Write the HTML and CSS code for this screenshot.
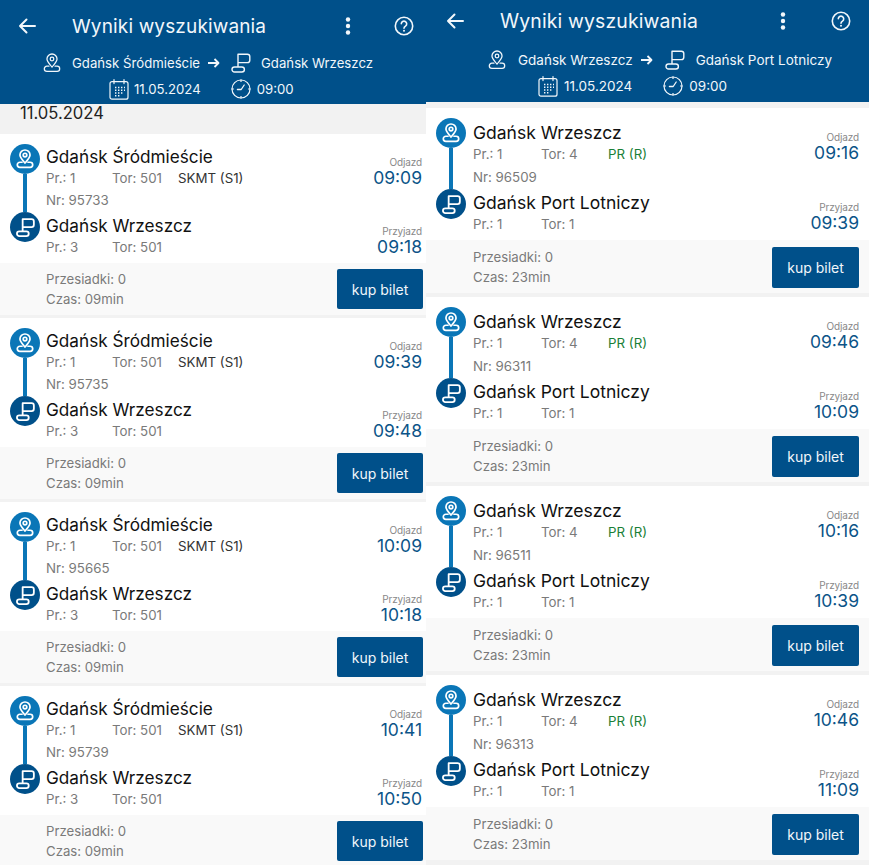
FILE: index.html
```html
<!DOCTYPE html>
<html lang="pl">
<head>
<meta charset="utf-8">
<title>Wyniki wyszukiwania</title>
<link rel="stylesheet" href="styles.css">
</head>
<body>
<svg class="defs" width="0" height="0" aria-hidden="true">
  <symbol id="pin" viewBox="0 0 20 22">
    <path class="s" d="M10 15.500C7.400 12.200 4.400 9.600 4.400 6.600a5.600 5.600 0 0 1 11.200 0c0 3-3 5.600-5.600 8.900z" stroke-linejoin="round"/>
    <circle class="s" cx="10" cy="6.600" r="2"/>
    <path class="s" d="M6.600 14.600H4.300a2.800 2.800 0 0 0 0 5.700h11.400a2.800 2.800 0 0 0 0-5.700h-2.300" stroke-linecap="round"/>
  </symbol>
  <symbol id="flag" viewBox="0 0 20 20">
    <path class="s" d="M7 14V1.200h9.400a2.400 2.400 0 0 1 2.400 2.400v3.600a2.400 2.400 0 0 1-2.400 2.400H7" stroke-linejoin="round"/>
    <rect class="s" x="1" y="14" width="12.400" height="5" rx="2.500"/>
  </symbol>
  <symbol id="cal" viewBox="0 0 20 21">
    <rect x="1" y="2.600" width="18" height="17.600" rx="2" fill="none" stroke="currentColor" stroke-width="1.200"/>
    <path d="M5 .6v4M15 .6v4" stroke="currentColor" stroke-width="1.200" stroke-linecap="round"/>
    <path d="M6 8.500h1.400M9 8.500h1.400M12 8.500h1.400M15 8.500h1M6 11.200h1.400M9 11.200h1.400M12 11.200h1.400M15 11.200h1M6 14h1.400M9 14h1.400M12 14h1.400M6 16.700h1.400M9 16.700h1.400" stroke="currentColor" stroke-width="1.400"/>
  </symbol>
  <symbol id="clock" viewBox="0 0 20 20">
    <circle cx="10" cy="10" r="9" fill="none" stroke="currentColor" stroke-width="1.200"/>
    <path d="M10 .5v2.400M19.500 10h-2.400M10 19.500v-2.400M.5 10h2.400" stroke="currentColor" stroke-width="1.200"/>
    <path d="M6.400 10.500H10.200L13.200 6" fill="none" stroke="currentColor" stroke-width="1.300" stroke-linecap="round" stroke-linejoin="round"/>
  </symbol>
  <symbol id="back" viewBox="0 0 18 16">
    <path d="M17 8H2M8.500 1.500 2 8l6.500 6.500" fill="none" stroke="currentColor" stroke-width="2" stroke-linecap="round" stroke-linejoin="round"/>
  </symbol>
  <symbol id="help" viewBox="0 0 20 20">
    <circle cx="10" cy="10" r="8.700" fill="none" stroke="currentColor" stroke-width="1.600"/>
    <path d="M7.300 7.800a2.700 2.700 0 1 1 4.200 2.300c-1 .7-1.500 1.100-1.500 2.200" fill="none" stroke="currentColor" stroke-width="1.600" stroke-linecap="round"/>
    <circle cx="10" cy="14.800" r="1" fill="currentColor"/>
  </symbol>
  <symbol id="dots" viewBox="0 0 6 18">
    <circle cx="3" cy="2.500" r="2.200" fill="currentColor"/>
    <circle cx="3" cy="9" r="2.200" fill="currentColor"/>
    <circle cx="3" cy="15.500" r="2.200" fill="currentColor"/>
  </symbol>
  <symbol id="go" viewBox="0 0 13 10">
    <path d="M1 5h10.500M7.500 1l4 4-4 4" fill="none" stroke="currentColor" stroke-width="1.800" stroke-linejoin="round"/>
  </symbol>
</svg>

<div class="screens">
  <section class="panel panel-left">
    <header class="top">
      <div class="bar">
        <svg class="i-back"><use href="#back"/></svg>
        <h1 class="title">Wyniki wyszukiwania</h1>
        <svg class="i-dots"><use href="#dots"/></svg>
        <svg class="i-help"><use href="#help"/></svg>
      </div>
      <div class="route">
        <svg class="i-pin"><use href="#pin"/></svg>
        <span class="route-from">Gdańsk Śródmieście</span>
        <svg class="i-go"><use href="#go"/></svg>
        <svg class="i-flag"><use href="#flag"/></svg>
        <span class="route-to">Gdańsk Wrzeszcz</span>
      </div>
      <div class="when">
        <svg class="i-cal"><use href="#cal"/></svg>
        <span class="when-date">11.05.2024</span>
        <svg class="i-clock"><use href="#clock"/></svg>
        <span>09:00</span>
      </div>
    </header>
    <div class="date-bar">11.05.2024</div>

    <article class="card">
      <div class="main">
        <div class="rail"><span class="dot dot-a"><svg class="dot-pin"><use href="#pin"/></svg></span><span class="line"></span><span class="dot dot-b"><svg class="dot-flag"><use href="#flag"/></svg></span></div>
        <div class="stops">
          <div class="name">Gdańsk Śródmieście</div>
          <div class="row"><span class="pr">Pr.: 1</span><span class="tor">Tor: 501</span><span class="kind">SKMT (S1)</span></div>
          <div class="row">Nr: 95733</div>
          <div class="name name-b">Gdańsk Wrzeszcz</div>
          <div class="row"><span class="pr">Pr.: 3</span><span class="tor">Tor: 501</span></div>
        </div>
        <div class="times">
          <div class="label">Odjazd</div><div class="time">09:09</div>
          <div class="label label-b">Przyjazd</div><div class="time">09:18</div>
        </div>
      </div>
      <div class="foot">
        <div class="info"><div>Przesiadki: 0</div><div>Czas: 09min</div></div>
        <button class="buy">kup bilet</button>
      </div>
    </article>

    <article class="card">
      <div class="main">
        <div class="rail"><span class="dot dot-a"><svg class="dot-pin"><use href="#pin"/></svg></span><span class="line"></span><span class="dot dot-b"><svg class="dot-flag"><use href="#flag"/></svg></span></div>
        <div class="stops">
          <div class="name">Gdańsk Śródmieście</div>
          <div class="row"><span class="pr">Pr.: 1</span><span class="tor">Tor: 501</span><span class="kind">SKMT (S1)</span></div>
          <div class="row">Nr: 95735</div>
          <div class="name name-b">Gdańsk Wrzeszcz</div>
          <div class="row"><span class="pr">Pr.: 3</span><span class="tor">Tor: 501</span></div>
        </div>
        <div class="times">
          <div class="label">Odjazd</div><div class="time">09:39</div>
          <div class="label label-b">Przyjazd</div><div class="time">09:48</div>
        </div>
      </div>
      <div class="foot">
        <div class="info"><div>Przesiadki: 0</div><div>Czas: 09min</div></div>
        <button class="buy">kup bilet</button>
      </div>
    </article>

    <article class="card">
      <div class="main">
        <div class="rail"><span class="dot dot-a"><svg class="dot-pin"><use href="#pin"/></svg></span><span class="line"></span><span class="dot dot-b"><svg class="dot-flag"><use href="#flag"/></svg></span></div>
        <div class="stops">
          <div class="name">Gdańsk Śródmieście</div>
          <div class="row"><span class="pr">Pr.: 1</span><span class="tor">Tor: 501</span><span class="kind">SKMT (S1)</span></div>
          <div class="row">Nr: 95665</div>
          <div class="name name-b">Gdańsk Wrzeszcz</div>
          <div class="row"><span class="pr">Pr.: 3</span><span class="tor">Tor: 501</span></div>
        </div>
        <div class="times">
          <div class="label">Odjazd</div><div class="time">10:09</div>
          <div class="label label-b">Przyjazd</div><div class="time">10:18</div>
        </div>
      </div>
      <div class="foot">
        <div class="info"><div>Przesiadki: 0</div><div>Czas: 09min</div></div>
        <button class="buy">kup bilet</button>
      </div>
    </article>

    <article class="card">
      <div class="main">
        <div class="rail"><span class="dot dot-a"><svg class="dot-pin"><use href="#pin"/></svg></span><span class="line"></span><span class="dot dot-b"><svg class="dot-flag"><use href="#flag"/></svg></span></div>
        <div class="stops">
          <div class="name">Gdańsk Śródmieście</div>
          <div class="row"><span class="pr">Pr.: 1</span><span class="tor">Tor: 501</span><span class="kind">SKMT (S1)</span></div>
          <div class="row">Nr: 95739</div>
          <div class="name name-b">Gdańsk Wrzeszcz</div>
          <div class="row"><span class="pr">Pr.: 3</span><span class="tor">Tor: 501</span></div>
        </div>
        <div class="times">
          <div class="label">Odjazd</div><div class="time">10:41</div>
          <div class="label label-b">Przyjazd</div><div class="time">10:50</div>
        </div>
      </div>
      <div class="foot">
        <div class="info"><div>Przesiadki: 0</div><div>Czas: 09min</div></div>
        <button class="buy">kup bilet</button>
      </div>
    </article>
  </section>

  <section class="panel panel-right">
    <header class="top">
      <div class="bar">
        <svg class="i-back"><use href="#back"/></svg>
        <h1 class="title">Wyniki wyszukiwania</h1>
        <svg class="i-dots"><use href="#dots"/></svg>
        <svg class="i-help"><use href="#help"/></svg>
      </div>
      <div class="route">
        <svg class="i-pin"><use href="#pin"/></svg>
        <span class="route-from">Gdańsk Wrzeszcz</span>
        <svg class="i-go"><use href="#go"/></svg>
        <svg class="i-flag"><use href="#flag"/></svg>
        <span class="route-to">Gdańsk Port Lotniczy</span>
      </div>
      <div class="when">
        <svg class="i-cal"><use href="#cal"/></svg>
        <span class="when-date">11.05.2024</span>
        <svg class="i-clock"><use href="#clock"/></svg>
        <span>09:00</span>
      </div>
    </header>

    <article class="card">
      <div class="main">
        <div class="rail"><span class="dot dot-a"><svg class="dot-pin"><use href="#pin"/></svg></span><span class="line"></span><span class="dot dot-b"><svg class="dot-flag"><use href="#flag"/></svg></span></div>
        <div class="stops">
          <div class="name">Gdańsk Wrzeszcz</div>
          <div class="row"><span class="pr">Pr.: 1</span><span class="tor">Tor: 4</span><span class="kind kind-green">PR (R)</span></div>
          <div class="row">Nr: 96509</div>
          <div class="name name-b">Gdańsk Port Lotniczy</div>
          <div class="row"><span class="pr">Pr.: 1</span><span class="tor">Tor: 1</span></div>
        </div>
        <div class="times">
          <div class="label">Odjazd</div><div class="time">09:16</div>
          <div class="label label-b">Przyjazd</div><div class="time">09:39</div>
        </div>
      </div>
      <div class="foot">
        <div class="info"><div>Przesiadki: 0</div><div>Czas: 23min</div></div>
        <button class="buy">kup bilet</button>
      </div>
    </article>

    <article class="card">
      <div class="main">
        <div class="rail"><span class="dot dot-a"><svg class="dot-pin"><use href="#pin"/></svg></span><span class="line"></span><span class="dot dot-b"><svg class="dot-flag"><use href="#flag"/></svg></span></div>
        <div class="stops">
          <div class="name">Gdańsk Wrzeszcz</div>
          <div class="row"><span class="pr">Pr.: 1</span><span class="tor">Tor: 4</span><span class="kind kind-green">PR (R)</span></div>
          <div class="row">Nr: 96311</div>
          <div class="name name-b">Gdańsk Port Lotniczy</div>
          <div class="row"><span class="pr">Pr.: 1</span><span class="tor">Tor: 1</span></div>
        </div>
        <div class="times">
          <div class="label">Odjazd</div><div class="time">09:46</div>
          <div class="label label-b">Przyjazd</div><div class="time">10:09</div>
        </div>
      </div>
      <div class="foot">
        <div class="info"><div>Przesiadki: 0</div><div>Czas: 23min</div></div>
        <button class="buy">kup bilet</button>
      </div>
    </article>

    <article class="card">
      <div class="main">
        <div class="rail"><span class="dot dot-a"><svg class="dot-pin"><use href="#pin"/></svg></span><span class="line"></span><span class="dot dot-b"><svg class="dot-flag"><use href="#flag"/></svg></span></div>
        <div class="stops">
          <div class="name">Gdańsk Wrzeszcz</div>
          <div class="row"><span class="pr">Pr.: 1</span><span class="tor">Tor: 4</span><span class="kind kind-green">PR (R)</span></div>
          <div class="row">Nr: 96511</div>
          <div class="name name-b">Gdańsk Port Lotniczy</div>
          <div class="row"><span class="pr">Pr.: 1</span><span class="tor">Tor: 1</span></div>
        </div>
        <div class="times">
          <div class="label">Odjazd</div><div class="time">10:16</div>
          <div class="label label-b">Przyjazd</div><div class="time">10:39</div>
        </div>
      </div>
      <div class="foot">
        <div class="info"><div>Przesiadki: 0</div><div>Czas: 23min</div></div>
        <button class="buy">kup bilet</button>
      </div>
    </article>

    <article class="card">
      <div class="main">
        <div class="rail"><span class="dot dot-a"><svg class="dot-pin"><use href="#pin"/></svg></span><span class="line"></span><span class="dot dot-b"><svg class="dot-flag"><use href="#flag"/></svg></span></div>
        <div class="stops">
          <div class="name">Gdańsk Wrzeszcz</div>
          <div class="row"><span class="pr">Pr.: 1</span><span class="tor">Tor: 4</span><span class="kind kind-green">PR (R)</span></div>
          <div class="row">Nr: 96313</div>
          <div class="name name-b">Gdańsk Port Lotniczy</div>
          <div class="row"><span class="pr">Pr.: 1</span><span class="tor">Tor: 1</span></div>
        </div>
        <div class="times">
          <div class="label">Odjazd</div><div class="time">10:46</div>
          <div class="label label-b">Przyjazd</div><div class="time">11:09</div>
        </div>
      </div>
      <div class="foot">
        <div class="info"><div>Przesiadki: 0</div><div>Czas: 23min</div></div>
        <button class="buy">kup bilet</button>
      </div>
    </article>
  </section>
</div>
</body>
</html>
```
FILE: styles.css
```css
* { box-sizing: border-box; }
html, body { margin: 0; height: 100%; overflow: hidden; }
body {
  background: #f2f2f2;
  font-family: Inter, "Open Sans", sans-serif;
  color: #7a7a7a;
}
.defs { position: absolute; }
.s { fill: none; stroke: currentColor; stroke-width: var(--sw, 1.4); }
.screens { display: flex; height: 865px; overflow: hidden; }
.panel { display: flex; flex-direction: column; overflow: hidden; height: 865px; background: #f2f2f2; }
.panel-left { width: 426px; }
.panel-right { width: 443px; }

/* header */
.top { background: #00508a; color: #f2f7fb; flex: none; }
.panel-left .top { height: 104px; }
.panel-right .top { height: 102px; margin-bottom: 6px; }
.bar { display: flex; align-items: center; }
.panel-left .bar { height: 36px; margin-top: 8px; padding-left: 18px; }
.panel-right .bar { height: 36px; margin-top: 3px; padding-left: 20px; }
.title { margin: 0; font-weight: 400; font-size: 19px; white-space: nowrap; letter-spacing: .15px; }
.panel-left .title { width: 273px; margin-left: 36px; }
.panel-right .title { width: 280px; margin-left: 36px; font-size: 19.400px; }
.i-back { width: 18px; height: 16px; flex: none; }
.i-dots { width: 6px; height: 18px; flex: none; }
.i-help { width: 20px; height: 20px; flex: none; margin-left: 43px; }
.panel-right .i-help { margin-left: 45px; }

.route, .when { display: flex; align-items: center; white-space: nowrap; }
.panel-left .route, .panel-left .when { font-size: 13.200px; }
.panel-right .route, .panel-right .when { font-size: 13.500px; }
.route { height: 24px; }
.when { height: 24px; }
.panel-left .route { margin-top: 7px; padding-left: 43px; }
.panel-left .when { margin-top: 2px; padding-left: 109px; }
.panel-right .route { margin-top: 9px; padding-left: 62px; }
.panel-right .when { margin-top: 2px; padding-left: 112px; }
.i-pin { width: 18px; height: 20px; flex: none; }
.i-flag { width: 20px; height: 20px; flex: none; margin-left: 11px; }
.panel-right .i-flag { margin-left: 12px; }
.i-go { width: 13px; height: 10px; flex: none; margin-left: 7px; }
.i-cal { width: 20px; height: 21px; flex: none; }
.i-clock { width: 20px; height: 20px; flex: none; }
.route-from { margin-left: 11px; }
.route-to { margin-left: 10px; }
.panel-right .route-from { margin-left: 12px; }
.panel-right .route-to { margin-left: 11px; }
.when-date { margin-left: 5px; margin-right: 30px; }
.panel-right .when-date { margin-left: 6px; margin-right: 31px; }
.i-clock + span { margin-left: 6px; }

.date-bar {
  flex: none;
  height: 30px;
  padding-left: 20px;
  font-size: 16.600px;
  line-height: 18px;
  color: #222;
}

/* cards */
.card { flex: none; background: #fff; }
.panel-left .card { margin-bottom: 3px; }
.panel-right .card { margin-bottom: 4px; }
.main { display: flex; }
.panel-left .main { height: 129px; padding: 10px 4px 0 10px; }
.panel-right .main { height: 132px; padding: 10px 10px 0 10px; }

.rail { display: flex; flex-direction: column; align-items: center; width: 30px; flex: none; }
.dot { --sw: 1.900; width: 30px; height: 30px; border-radius: 50%; display: flex; align-items: center; justify-content: center; color: #fff; flex: none; }
.dot-a { background: #0a76b7; }
.dot-b { background: #00508a; }
.dot-pin { width: 18px; height: 20px; }
.dot-flag { width: 19px; height: 19px; }
.line { width: 4px; background: #0a76b7; flex: none; }
.panel-left .line { height: 38px; }
.panel-right .line { height: 41px; }

.stops { flex: 1; font-size: 13.300px; }
.panel-left .stops { margin-left: 6px; padding-top: 3px; }
.panel-right .stops { margin-left: 7px; padding-top: 4px; }
.name { color: #111; font-size: 17.200px; line-height: 20px; white-space: nowrap; }
.panel-right .name { font-size: 17.500px; line-height: 21px; }
.name-b { margin-top: 5px; }
.panel-right .name-b { margin-top: 4px; }
.row { display: flex; line-height: 22px; white-space: nowrap; }
.panel-right .row { line-height: 22.500px; }
.pr { width: 66px; }
.panel-right .pr { width: 68px; }
.tor { width: 66px; }
.panel-right .tor { width: 67px; }
.kind { color: #333; }
.kind-green { color: #1a7f37; }

.times { flex: none; text-align: right; }
.panel-left .times { padding-top: 11px; }
.panel-right .times { padding-top: 12px; }
.label { font-size: 10px; line-height: 14px; color: #888; letter-spacing: -.15px; }
.label-b { margin-top: 38px; }
.panel-right .label-b { margin-top: 39px; }
.time { font-size: 17.500px; line-height: 17px; color: #0c5488; }

.foot { display: flex; align-items: flex-start; justify-content: space-between; background: #f9f9f9; font-size: 13.200px; }
.panel-left .foot { height: 52px; padding: 6px 3px 0 46px; }
.panel-right .foot { height: 53px; padding: 7px 10px 0 47px; }
.info { line-height: 20px; }
.buy {
  border: 0;
  border-radius: 2px;
  background: #00508a;
  color: #f2f7fb;
  font: inherit;
  font-size: 14px;
  padding: 0;
  cursor: pointer;
}
.panel-left .buy { width: 86px; height: 40px; }
.panel-right .buy { width: 87px; height: 41px; }
```
